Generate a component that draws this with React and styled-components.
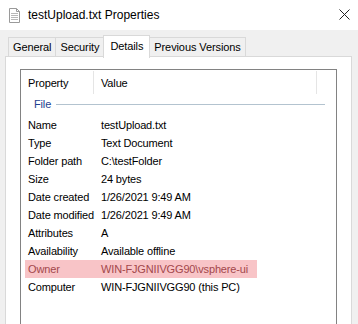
import React from "react";
import styled, { createGlobalStyle } from "styled-components";

const GlobalStyle = createGlobalStyle`
  html, body {
    margin: 0;
    padding: 0;
    background: #f0f0f0;
    overflow: hidden;
  }
  body {
    font-family: "Liberation Sans", Arial, sans-serif;
    color: #000;
  }
`;

const rows = [
  { name: "Name", value: "testUpload.txt" },
  { name: "Type", value: "Text Document" },
  { name: "Folder path", value: "C:\\testFolder" },
  { name: "Size", value: "24 bytes" },
  { name: "Date created", value: "1/26/2021 9:49 AM" },
  { name: "Date modified", value: "1/26/2021 9:49 AM" },
  { name: "Attributes", value: "A" },
  { name: "Availability", value: "Available offline" },
  { name: "Owner", value: "WIN-FJGNIIVGG90\\vsphere-ui", marked: true },
  { name: "Computer", value: "WIN-FJGNIIVGG90 (this PC)" },
];

const tabs = ["General", "Security", "Details", "Previous Versions"];

const FileIcon = () => (
  <svg width="11" height="15" viewBox="0 0 11 15">
    <path d="M0.5 0.5 H7.5 L10.5 3.5 V14.5 H0.5 Z" fill="#fff" stroke="#9a9a9a" />
    <path d="M7.5 0.5 V3.5 H10.5" fill="none" stroke="#9a9a9a" />
    <path d="M2 5.5 H9 M2 7.5 H9 M2 9.5 H9 M2 11.5 H9" stroke="#b8b8b8" />
  </svg>
);

const CloseIcon = () => (
  <svg width="11" height="11" viewBox="0 0 11 11">
    <path d="M0.5 0.5 L10.5 10.5 M10.5 0.5 L0.5 10.5" stroke="#222" strokeWidth="1" />
  </svg>
);

const App = () => {
  return (
    <Window>
      <GlobalStyle />
      <TitleBar>
        <IconBox>
          <FileIcon />
        </IconBox>
        <Title>testUpload.txt Properties</Title>
        <CloseBox>
          <CloseIcon />
        </CloseBox>
      </TitleBar>
      <Body>
        <TabRow>
          {tabs.map((t) => (
            <Tab key={t} $active={t === "Details"}>
              {t}
            </Tab>
          ))}
        </TabRow>
        <Panel>
          <List>
            <HeaderRow>
              <HeaderCell>Property</HeaderCell>
              <HeaderCell>Value</HeaderCell>
              <div />
            </HeaderRow>
            <Group>
              <GroupLabel>File</GroupLabel>
              <GroupLine />
            </Group>
            {rows.map((r) => (
              <Row key={r.name} $marked={r.marked}>
                <span>{r.name}</span>
                <span>{r.value}</span>
              </Row>
            ))}
          </List>
        </Panel>
      </Body>
    </Window>
  );
};

export default App;

const Window = styled.div`
  width: 358px;
  height: 324px;
  display: flex;
  flex-direction: column;
  background: #f0f0f0;
`;

const TitleBar = styled.div`
  height: 30px;
  flex: none;
  display: flex;
  align-items: center;
  background: #fff;
  padding-left: 9px;
`;

const IconBox = styled.div`
  display: flex;
  width: 11px;
  height: 15px;
  margin-top: 1px;
`;

const Title = styled.div`
  margin-left: 8px;
  font-size: 12px;
  color: #000;
`;

const CloseBox = styled.div`
  margin-left: auto;
  margin-right: 8px;
  width: 11px;
  height: 11px;
  display: flex;
  margin-top: -2px;
`;

const Body = styled.div`
  flex: 1;
  display: flex;
  flex-direction: column;
  padding: 5px 6px 0 5px;
  min-height: 0;
`;

const TabRow = styled.div`
  display: flex;
  align-items: flex-end;
  height: 22px;
  padding-left: 4px;
  position: relative;
  z-index: 1;
`;

const Tab = styled.div`
  box-sizing: border-box;
  height: ${(p) => (p.$active ? "23px" : "20px")};
  margin-bottom: ${(p) => (p.$active ? "-1px" : "0")};
  padding: 0 ${(p) => (p.$active ? "6px" : "4px")};
  padding-bottom: ${(p) => (p.$active ? "2px" : "0")};
  display: flex;
  align-items: center;
  font-size: 11px;
  letter-spacing: -0.1px;
  background: ${(p) => (p.$active ? "#fff" : "#f0f0f0")};
  border: 1px solid #d9d9d9;
  border-bottom: ${(p) => (p.$active ? "none" : "1px solid #d9d9d9")};
  margin-left: -1px;
  white-space: nowrap;
`;

const Panel = styled.div`
  flex: 1;
  background: #fff;
  border: 1px solid #d9d9d9;
  border-bottom: none;
  margin-top: -1px;
  padding: 12px 14px 0 14px;
  min-height: 0;
`;

const List = styled.div`
  height: 100%;
  border: 1px solid #828282;
  border-bottom: none;
  box-sizing: border-box;
  font-size: 11px;
  letter-spacing: -0.15px;
`;

const HeaderRow = styled.div`
  display: grid;
  grid-template-columns: 73px 1fr 19px;
  height: 25px;
`;

const HeaderCell = styled.div`
  display: flex;
  align-items: center;
  padding-left: 7px;
  border-right: 1px solid #e5e5e5;
  margin: 1px 0;
`;

const Group = styled.div`
  display: flex;
  align-items: center;
  height: 21px;
  padding: 0 11px 3px 13px;
  box-sizing: border-box;
`;

const GroupLabel = styled.span`
  color: #1e3f8f;
  font-size: 11px;
`;

const GroupLine = styled.div`
  flex: 1;
  height: 1px;
  background: #b3c3cf;
  margin-left: 5px;
`;

const Row = styled.div`
  display: grid;
  grid-template-columns: 73px 1fr;
  height: 18px;
  align-items: center;
  padding-left: ${(p) => (p.$marked ? "3px" : "7px")};
  margin-left: ${(p) => (p.$marked ? "4px" : "0")};
  width: ${(p) => (p.$marked ? "229px" : "auto")};
  background: ${(p) => (p.$marked ? "#f8c4c7" : "transparent")};
  color: ${(p) => (p.$marked ? "#a3474b" : "#000")};
  white-space: nowrap;
`;
